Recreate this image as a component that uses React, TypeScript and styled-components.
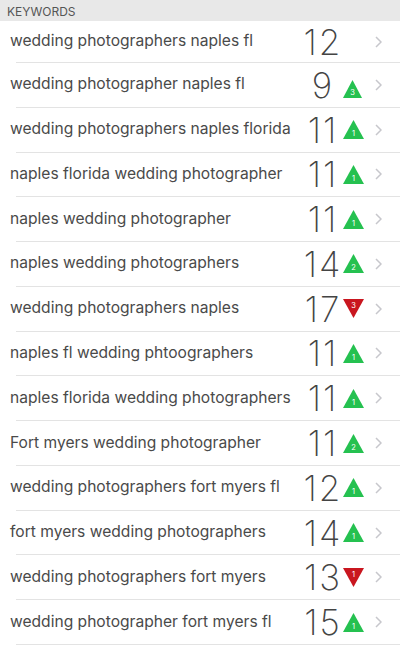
import React from "react";
import styled, { createGlobalStyle } from "styled-components";

const Global = createGlobalStyle`
  html, body { margin: 0; padding: 0; background: #fff; }
  body { font-family: Inter, "Noto Sans", sans-serif; width: 400px; overflow: hidden; }
`;

const Page = styled.div`
  width: 400px;
  height: 646px;
  overflow: hidden;
  background: #fff;
  display: flex;
  flex-direction: column;
`;

const Header = styled.div`
  height: 21px;
  flex: none;
  background: #e8e8e8;
  color: #555;
  font-size: 12px;
  display: flex;
  align-items: center;
  padding-left: 7px;
  padding-top: 1px;
  box-sizing: border-box;
`;

const Row = styled.div<{ $first?: boolean }>`
  position: relative;
  flex: none;
  height: ${(p) => (p.$first ? "42px" : "44.77px")};
  box-sizing: border-box;
  display: flex;
  align-items: center;
  padding: 0 18px 1px 10px;
  &::after {
    content: "";
    position: absolute;
    left: 16px;
    right: 0;
    bottom: 0;
    height: 1px;
    background: #e3e3e3;
  }
`;

const Keyword = styled.div`
  flex: 1;
  font-size: 15.6px;
  color: #4a4a4a;
  white-space: nowrap;
  margin-top: -2px;
`;

const Rank = styled.div`
  width: 42px;
  text-align: center;
  font-size: 35px;
  font-weight: 160;
  letter-spacing: 2px;
  text-indent: 2px;
  color: #444;
  line-height: 1;
  margin-top: 1px;
`;

const BadgeSlot = styled.div`
  width: 22px;
  height: 20px;
  display: flex;
  align-items: center;
  justify-content: flex-start;
`;

const Chevron = styled.svg`
  margin-left: 10px;
  flex: none;
`;

type Item = { k: string; n: number; d?: number; up?: boolean; small?: boolean };

const items: Item[] = [
  { k: "wedding photographers naples fl", n: 12 },
  { k: "wedding photographer naples fl", n: 9, d: 3, up: true, small: true },
  { k: "wedding photographers naples florida", n: 11, d: 1, up: true },
  { k: "naples florida wedding photographer", n: 11, d: 1, up: true },
  { k: "naples wedding photographer", n: 11, d: 1, up: true },
  { k: "naples wedding photographers", n: 14, d: 2, up: true },
  { k: "wedding photographers naples", n: 17, d: 3, up: false },
  { k: "naples fl wedding phtoographers", n: 11, d: 1, up: true },
  { k: "naples florida wedding photographers", n: 11, d: 1, up: true },
  { k: "Fort myers wedding photographer", n: 11, d: 2, up: true },
  { k: "wedding photographers fort myers fl", n: 12, d: 1, up: true },
  { k: "fort myers wedding photographers", n: 14, d: 1, up: true },
  { k: "wedding photographers fort myers", n: 13, d: 1, up: false },
  { k: "wedding photographer fort myers fl", n: 15, d: 1, up: true },
];

const Badge: React.FC<{ d: number; up: boolean; small?: boolean }> = ({ d, up, small }) => {
  const w = small ? 19 : 21;
  const h = small ? 18 : 19;
  const fill = up ? "#25c150" : "#c9161f";
  const pts = up ? `${w / 2},0 ${w},${h} 0,${h}` : `0,0 ${w},0 ${w / 2},${h}`;
  return (
    <svg width={w} height={h} viewBox={`0 0 ${w} ${h}`} style={small ? { marginTop: 9 } : undefined}>
      <polygon points={pts} fill={fill} />
      <text
        x={w / 2}
        y={up ? h - 3 : 9}
        textAnchor="middle"
        fontSize="7.5"
        fontFamily="Inter, sans-serif"
        fill="#fff"
      >
        {d}
      </text>
    </svg>
  );
};

export default function App() {
  return (
    <Page>
      <Global />
      <Header>KEYWORDS</Header>
      {items.map((it, i) => (
        <Row key={i} $first={i === 0}>
          <Keyword>{it.k}</Keyword>
          <Rank>{it.n}</Rank>
          <BadgeSlot>{it.d !== undefined && <Badge d={it.d} up={!!it.up} small={it.small} />}</BadgeSlot>
          <Chevron width="7" height="12" viewBox="0 0 7 12">
            <polyline points="1,1 6,6 1,11" fill="none" stroke="#c7c7cc" strokeWidth="1.5" />
          </Chevron>
        </Row>
      ))}
    </Page>
  );
}
